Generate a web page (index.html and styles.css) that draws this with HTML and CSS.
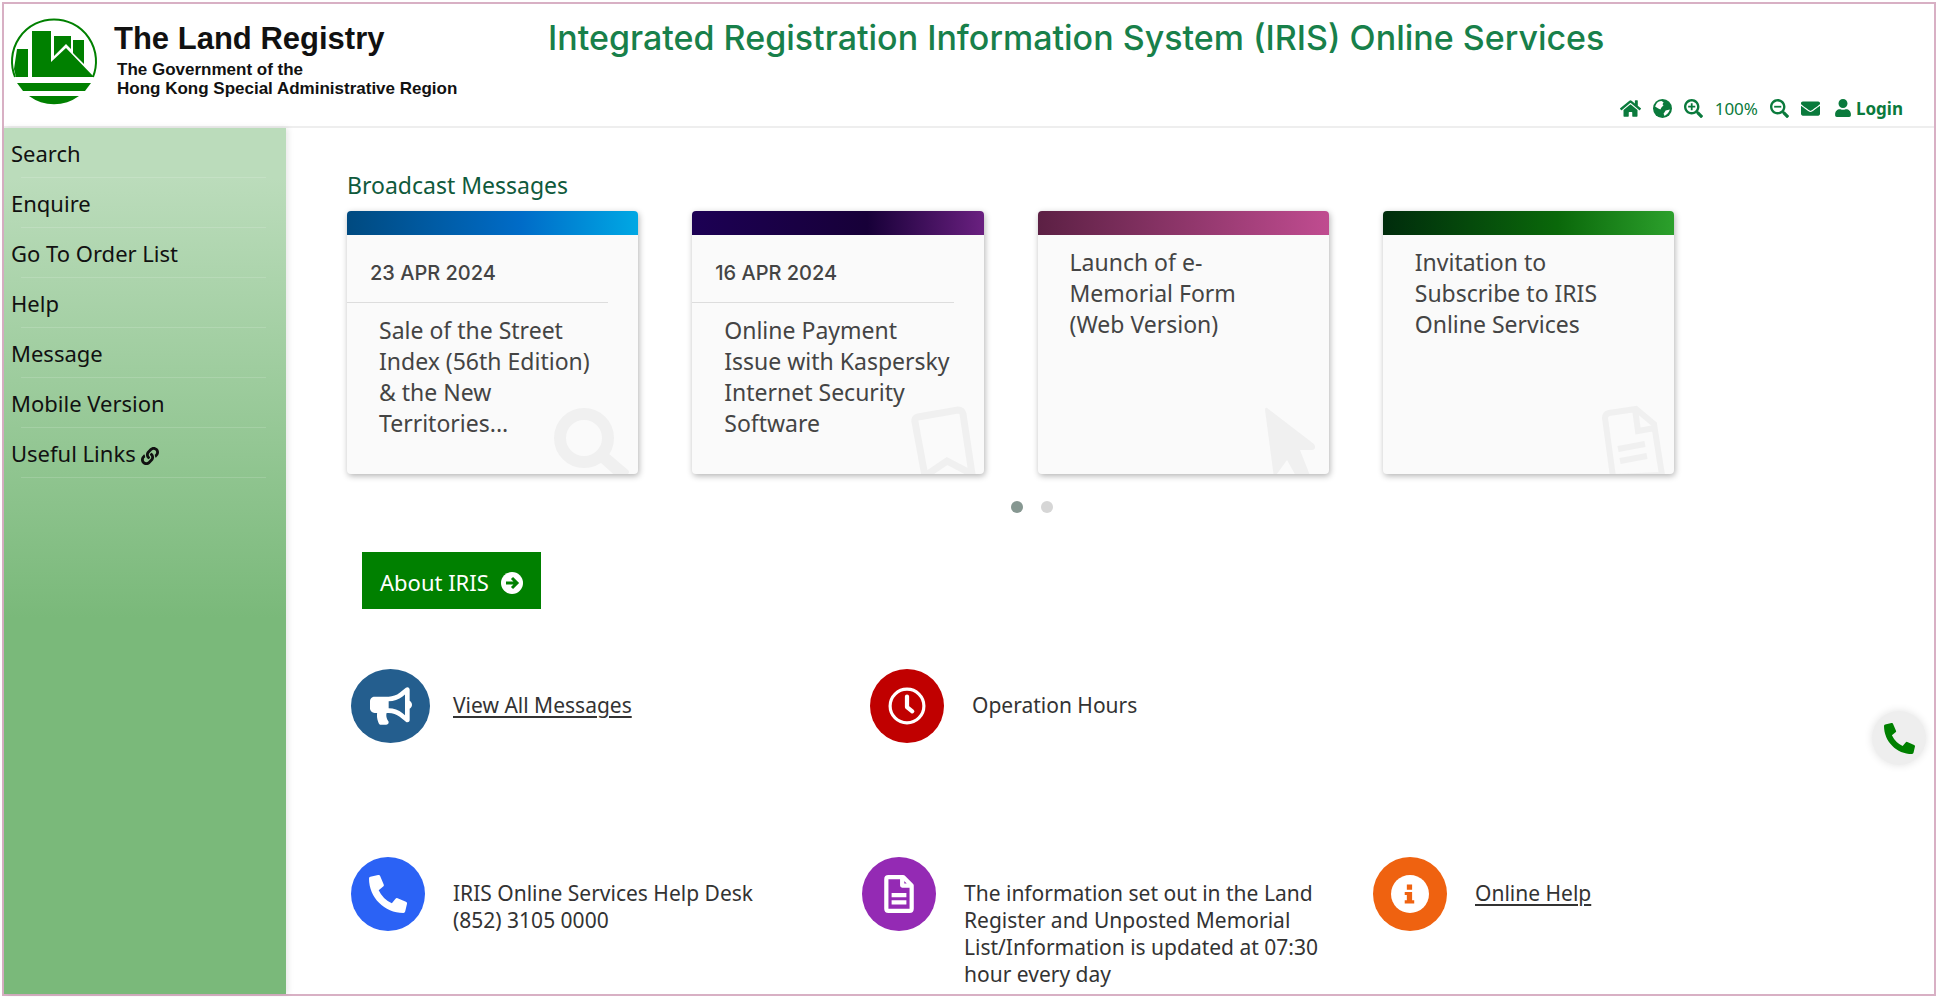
FILE: index.html
```html
<!DOCTYPE html>
<html lang="en">
<head>
  <meta charset="UTF-8">
  <meta name="viewport" content="width=device-width, initial-scale=1">
  <title>IRIS Online Services</title>
  <link rel="stylesheet" href="styles.css">
</head>
<body>
  <div class="page">
    <header class="header">
      <a href="#" class="brand">
        <svg class="brand-logo" viewBox="0 0 88 88" aria-hidden="true">
          <path d="M5 60 A42 42 0 1 1 83 60" fill="none" stroke="#008000" stroke-width="2"/>
          <path d="M7 32h11v28H6L4 52zM22 14h19v31l15-14 28 29H22zM44 19h17v13l-5-5-12 12zM63 23h11v24L63 36z"/>
          <path d="M7 66h74l-6 8H13zM19 79h50a42 42 0 0 1-50 0z"/>
        </svg>
        <span class="brand-text">
          <span class="brand-name">The Land Registry</span>
          <span class="brand-sub">The Government of the<br>Hong Kong Special Administrative Region</span>
        </span>
      </a>
      <h1 class="title">Integrated Registration Information System (IRIS) Online Services</h1>
      <div class="tools">
        <a href="#" aria-label="Home"><svg class="tool-icon wide" viewBox="0 0 576 512"><path d="M280.37 148.26L96 300.11V464a16 16 0 0 0 16 16l112.06-.29a16 16 0 0 0 15.92-16V368a16 16 0 0 1 16-16h64a16 16 0 0 1 16 16v95.64a16 16 0 0 0 16 16.05L464 480a16 16 0 0 0 16-16V300L295.67 148.26a12.19 12.19 0 0 0-15.3 0zM571.6 251.47L488 182.56V44.05a12 12 0 0 0-12-12h-56a12 12 0 0 0-12 12v72.61L318.47 43a48 48 0 0 0-61 0L4.34 251.47a12 12 0 0 0-1.6 16.9l25.5 31A12 12 0 0 0 45.15 301l235.22-193.74a12.19 12.19 0 0 1 15.3 0L530.9 301a12 12 0 0 0 16.9-1.6l25.5-31a12 12 0 0 0-1.7-16.93z"/></svg></a>
        <a href="#" aria-label="Language"><svg class="tool-icon" viewBox="0 0 18 18"><circle cx="9" cy="9" r="9"/><path fill="#fff" d="M3 5C4 3 6 2 8 2l2 1-1 2 1 1-2 2-1 2-2-1-3-2zM12 11l4-1c-1 3-3 5-5 6l-1-2z"/></svg></a>
        <button class="tool-button" aria-label="Zoom in"><svg class="tool-icon" viewBox="0 0 512 512"><path d="M505 442.7L405.3 343c-4.5-4.5-10.6-7-17-7H372c27.6-35.3 44-79.7 44-128C416 93.1 322.9 0 208 0S0 93.1 0 208s93.1 208 208 208c48.3 0 92.7-16.4 128-44v16.3c0 6.4 2.5 12.5 7 17l99.7 99.7c9.4 9.4 24.6 9.4 33.9 0l28.3-28.3c9.4-9.4 9.4-24.6.1-34zM208 352c-79.5 0-144-64.4-144-144 0-79.5 64.4-144 144-144 79.5 0 144 64.4 144 144 0 79.5-64.4 144-144 144z"/><path d="M184 112h48v72h72v48h-72v72h-48v-72h-72v-48h72z"/></svg></button>
        <span class="zoom-level">100%</span>
        <button class="tool-button" aria-label="Zoom out"><svg class="tool-icon" viewBox="0 0 512 512"><path d="M505 442.7L405.3 343c-4.5-4.5-10.6-7-17-7H372c27.6-35.3 44-79.7 44-128C416 93.1 322.9 0 208 0S0 93.1 0 208s93.1 208 208 208c48.3 0 92.7-16.4 128-44v16.3c0 6.4 2.5 12.5 7 17l99.7 99.7c9.4 9.4 24.6 9.4 33.9 0l28.3-28.3c9.4-9.4 9.4-24.6.1-34zM208 352c-79.5 0-144-64.4-144-144 0-79.5 64.4-144 144-144 79.5 0 144 64.4 144 144 0 79.5-64.4 144-144 144z"/><path d="M112 184h192v48H112z"/></svg></button>
        <a href="#" aria-label="Contact us"><svg class="tool-icon" viewBox="0 0 512 512"><path d="M502.3 190.8c3.9-3.1 9.7-.2 9.7 4.7V400c0 26.5-21.5 48-48 48H48c-26.5 0-48-21.5-48-48V195.6c0-5 5.7-7.8 9.7-4.7 22.4 17.4 52.1 39.5 154.1 113.6 21.1 15.4 56.7 47.8 92.2 47.6 35.7.3 72-32.8 92.3-47.6 102-74.1 131.6-96.3 154-113.7zM256 320c23.2.4 56.6-29.2 73.4-41.4 132.7-96.3 142.8-104.7 173.4-128.7 5.8-4.5 9.2-11.5 9.2-18.9v-19c0-26.5-21.5-48-48-48H48c-26.5 0-48 21.5-48 48v19c0 7.4 3.4 14.3 9.2 18.9 30.6 23.9 40.7 32.4 173.4 128.7 16.8 12.2 50.2 41.8 73.4 41.4z"/></svg></a>
        <a href="#" class="login"><svg class="user-icon" viewBox="0 0 448 512" aria-hidden="true"><path d="M224 256c70.7 0 128-57.3 128-128S294.7 0 224 0 96 57.3 96 128s57.3 128 128 128zm89.6 32h-16.7c-22.2 10.2-46.9 16-72.9 16s-50.6-5.8-72.9-16h-16.7C60.2 288 0 348.2 0 422.4V464c0 26.5 21.5 48 48 48h352c26.5 0 48-21.5 48-48v-41.6c0-74.2-60.2-134.4-134.4-134.4z"/></svg>Login</a>
      </div>
    </header>

    <div class="layout">
      <nav class="sidebar">
        <ul class="menu">
          <li><a href="#">Search</a></li>
          <li><a href="#">Enquire</a></li>
          <li><a href="#">Go To Order List</a></li>
          <li><a href="#">Help</a></li>
          <li><a href="#">Message</a></li>
          <li><a href="#">Mobile Version</a></li>
          <li><a href="#">Useful Links <svg class="link-icon" viewBox="0 0 512 512" aria-hidden="true"><path d="M326.612 185.391c59.747 59.809 58.927 155.698.36 214.59-.11.12-.24.25-.36.37l-67.2 67.2c-59.27 59.27-155.699 59.262-214.96 0-59.27-59.26-59.27-155.7 0-214.96l37.106-37.106c9.84-9.84 26.786-3.3 27.294 10.606.648 17.722 3.826 35.527 9.69 52.721 1.986 5.822.567 12.262-3.783 16.612l-13.087 13.087c-28.026 28.026-28.905 73.66-1.155 101.96 28.024 28.579 74.086 28.749 102.325.51l67.2-67.19c28.191-28.191 28.073-73.757 0-101.83-3.701-3.694-7.429-6.564-10.341-8.569a16.037 16.037 0 0 1-6.947-12.606c-.396-10.567 3.348-21.456 11.698-29.806l21.054-21.055c5.521-5.521 14.182-6.199 20.584-1.731a152.482 152.482 0 0 1 20.522 17.197zM467.547 44.449c-59.261-59.262-155.69-59.27-214.96 0l-67.2 67.2c-.12.12-.25.25-.36.37-58.566 58.892-59.387 154.781.36 214.59a152.454 152.454 0 0 0 20.521 17.196c6.402 4.468 15.064 3.789 20.584-1.731l21.054-21.055c8.35-8.35 12.094-19.239 11.698-29.806a16.037 16.037 0 0 0-6.947-12.606c-2.912-2.005-6.64-4.875-10.341-8.569-28.073-28.073-28.191-73.639 0-101.83l67.2-67.19c28.239-28.239 74.3-28.069 102.325.51 27.75 28.3 26.872 73.934-1.155 101.96l-13.087 13.087c-4.35 4.35-5.769 10.79-3.783 16.612 5.864 17.194 9.042 34.999 9.69 52.721.509 13.906 17.454 20.446 27.294 10.606l37.106-37.106c59.271-59.259 59.271-155.699.001-214.959z"/></svg></a></li>
        </ul>
      </nav>

      <main class="main">
        <section class="broadcast">
          <h2>Broadcast Messages</h2>
          <div class="cards">
            <article class="card card-blue">
              <p class="card-date">23 APR 2024</p>
              <p class="card-text">Sale of the Street Index (56th Edition) &amp; the New Territories...</p>
              <svg class="card-icon" viewBox="0 0 80 70" aria-hidden="true"><circle cx="32" cy="34" r="24" fill="none" stroke="#f0f0f0" stroke-width="12"/><path d="M56 49l20 17q2 2 0 4l-7 7-21-19z"/></svg>
            </article>
            <article class="card card-purple">
              <p class="card-date">16 APR 2024</p>
              <p class="card-text">Online Payment Issue with Kaspersky Internet Security Software</p>
              <svg class="card-icon" viewBox="-3 0 80 70" aria-hidden="true"><path d="M24 72L14 18q-1-4 3-5l40-7q4 0 5 4l9 60-25-13z" fill="none" stroke="#f0f0f0" stroke-width="7"/></svg>
            </article>
            <article class="card card-pink">
              <p class="card-text">Launch of e-Memorial Form (Web Version)</p>
              <svg class="card-icon" viewBox="-5 -2 80 70" aria-hidden="true"><path d="M19 2q-2-1-2 2l9 68 13-18 10 18h14L52 44l12 0q5-1 2-6z"/></svg>
            </article>
            <article class="card card-green">
              <p class="card-text">Invitation to Subscribe to IRIS Online Services</p>
              <svg class="card-icon" viewBox="-5 -2 80 70" aria-hidden="true"><g fill="none" stroke="#f0f0f0" stroke-width="6"><path d="M20 71L12 12q0-4 4-5l27-4 18 15 8 51zM42 3l3 22 17-3M25 43l27-5M27 55l27-5"/></g></svg>
            </article>
          </div>
          <div class="dots">
            <button class="dot active" aria-label="Slide 1"></button>
            <button class="dot" aria-label="Slide 2"></button>
          </div>
        </section>

        <a href="#" class="about">About IRIS
          <svg class="about-icon" viewBox="0 0 22 22" aria-hidden="true"><circle cx="11" cy="11" r="11" fill="#fff"/><path d="M5 11h11M11 6l5 5-5 5" fill="none" stroke="#008000" stroke-width="3"/></svg>
        </a>

        <div class="info-row info-top">
          <div class="info">
            <span class="info-icon navy"><svg viewBox="0 0 576 512" aria-hidden="true"><path d="M576 240c0-23.63-12.95-44.04-32-55.12V32.01C544 23.26 537.02 0 512 0c-7.12 0-14.19 2.38-19.98 7.02l-85.03 68.03C364.28 109.19 310.66 128 256 128H64c-35.35 0-64 28.65-64 64v96c0 35.35 28.65 64 64 64h33.7c-1.39 10.48-2.18 21.14-2.18 32 0 39.77 9.26 77.35 25.56 110.94 5.19 10.69 16.52 17.06 28.4 17.06h74.28c26.05 0 41.69-29.84 25.9-50.56-16.4-21.52-26.15-48.36-26.15-77.44 0-11.11 1.62-21.79 4.41-32H256c54.66 0 108.28 18.81 150.98 52.95l85.03 68.03a32.023 32.023 0 0 0 19.98 7.02c24.92 0 32-22.78 32-32V295.13C563.05 284.04 576 263.63 576 240zm-96 141.42l-33.05-26.44C392.95 311.78 325.12 288 256 288v-96c69.12 0 136.95-23.78 190.95-66.98L480 98.58v282.84z"/></svg></span>
            <a href="#">View All Messages</a>
          </div>
          <div class="info">
            <span class="info-icon red"><svg viewBox="0 0 36 36" aria-hidden="true"><g fill="none" stroke="#fff"><circle cx="18" cy="18" r="16" stroke-width="3"/><path d="M18 9v10l5 4" stroke-width="4" stroke-linecap="round" stroke-linejoin="round"/></g></svg></span>
            <p>Operation Hours</p>
          </div>
        </div>

        <div class="info-row">
          <div class="info">
            <span class="info-icon blue"><svg viewBox="0 0 512 512" aria-hidden="true"><path d="M497.39 361.8l-112-48a24 24 0 0 0-28 6.9l-49.6 60.6A370.66 370.66 0 0 1 130.6 204.11l60.6-49.6a23.94 23.94 0 0 0 6.9-28l-48-112A24.16 24.16 0 0 0 122.6.61l-104 24A24 24 0 0 0 0 48c0 256.5 207.9 464 464 464a24 24 0 0 0 23.4-18.6l24-104a24.29 24.29 0 0 0-14.01-27.6z"/></svg></span>
            <p>IRIS Online Services Help Desk<br>(852) 3105 0000</p>
          </div>
          <div class="info">
            <span class="info-icon violet"><svg viewBox="0 0 36 36" aria-hidden="true"><path d="M8 2h14l8 8v22q0 2-2 2H8q-2 0-2-2V4q0-2 2-2zM21 2v8h9M11 19h14M11 26h14" fill="none" stroke="#fff" stroke-width="4" stroke-linejoin="round"/></svg></span>
            <p>The information set out in the Land Register and Unposted Memorial List/Information is updated at 07:30 hour every day</p>
          </div>
          <div class="info">
            <span class="info-icon orange"><svg viewBox="0 0 36 36" aria-hidden="true"><circle cx="18" cy="18" r="18"/><path fill="#ef6210" d="M15 9h5v5h-5zM13 16h7v8h2v3h-9v-3h2v-5h-2z"/></svg></span>
            <a href="#">Online Help</a>
          </div>
        </div>
      </main>
    </div>

    <button class="call" aria-label="Call us"><svg viewBox="0 0 512 512"><path d="M497.39 361.8l-112-48a24 24 0 0 0-28 6.9l-49.6 60.6A370.66 370.66 0 0 1 130.6 204.11l60.6-49.6a23.94 23.94 0 0 0 6.9-28l-48-112A24.16 24.16 0 0 0 122.6.61l-104 24A24 24 0 0 0 0 48c0 256.5 207.9 464 464 464a24 24 0 0 0 23.4-18.6l24-104a24.29 24.29 0 0 0-14.01-27.6z"/></svg></button>
  </div>
</body>
</html>
```

FILE: styles.css
```css
* {
  box-sizing: border-box;
}
body {
  margin: 0;
  padding: 2px 2px 1px;
  font-family: "Noto Sans", sans-serif;
  font-size: 21px;
  line-height: 27px;
  color: #333;
  background: #fff;
}
h1, h2, p, ul {
  margin: 0;
  padding: 0;
  font-weight: 400;
}
svg {
  fill: currentColor;
}
button {
  border: 0;
  padding: 0;
  cursor: pointer;
}
.page {
  display: flex;
  flex-direction: column;
  min-height: calc(100vh - 3px);
  border: 2px solid #d8b0c4;
}

/* Header */
.header {
  display: grid;
  grid-template-columns: 544px 1fr;
  grid-template-rows: 88px 34px;
  border-bottom: 2px solid #eee;
}
.brand {
  display: flex;
  grid-row: span 2;
  gap: 16px;
  padding: 13px 0 0 6px;
  color: #111;
  font-family: "Liberation Sans", Arial, sans-serif;
  font-weight: 700;
  text-decoration: none;
}
.brand-logo {
  width: 88px;
  height: 88px;
  flex: none;
  color: #008000;
}
.brand-name {
  display: block;
  padding-top: 4px;
  font-size: 31px;
  line-height: 36px;
}
.brand-sub {
  display: block;
  padding: 3px 0 0 3px;
  font-size: 17px;
  line-height: 19px;
  white-space: nowrap;
}
.title {
  padding-top: 14px;
  font-family: Inter, sans-serif;
  font-size: 34px;
  font-weight: 500;
  line-height: 40px;
  color: #18804a;
}
.tools {
  display: flex;
  align-items: center;
  justify-content: flex-end;
  gap: 12px;
  grid-column: 2;
  padding: 0 31px 2px 0;
  font-size: 17px;
  color: #0a7a3c;
}
.tools a, .tool-button {
  display: flex;
  align-items: center;
  background: none;
  color: inherit;
  text-decoration: none;
}
.tool-icon {
  width: 19px;
  height: 19px;
}
.tool-icon.wide {
  width: 21px;
}
.tools .login {
  gap: 5px;
  margin-left: 3px;
  font-weight: 700;
}
.user-icon {
  width: 16px;
  height: 18px;
}

/* Sidebar */
.layout {
  display: flex;
  flex: 1;
}
.sidebar {
  width: 282px;
  flex: none;
  background: linear-gradient(#bbdcbb, #bbdcbb 50px, #7ab97a 490px);
  box-shadow: 2px 0 6px rgba(0,0,0,0.1);
}
.menu {
  list-style: none;
}
.menu a {
  display: block;
  padding: 12px 7px;
  font-size: 22px;
  line-height: 26px;
  color: #111;
  text-decoration: none;
}
.menu li::after {
  content: "";
  display: block;
  height: 1px;
  margin: -1px 20px 0 17px;
  background: rgba(255,255,255,0.15);
}
.link-icon {
  width: 18px;
  height: 18px;
  vertical-align: -3px;
}

/* Main area */
.main {
  flex: 1;
  min-width: 0;
  padding: 44px 50px 0 61px;
}
.broadcast {
  margin-right: 167px;
}
.broadcast h2 {
  margin-bottom: 12px;
  font-size: 23px;
  line-height: 27px;
  color: #0f5a3c;
}
.cards {
  display: grid;
  grid-template-columns: repeat(4, 1fr);
  gap: 54px;
  margin-right: 43px;
}
.card {
  position: relative;
  min-height: 263px;
  overflow: hidden;
  border-radius: 4px;
  background: #fafafa;
  box-shadow: 1px 2px 6px rgba(0,0,0,0.3);
}
.card::before {
  content: "";
  display: block;
  height: 24px;
}
.card-blue::before {
  background: linear-gradient(90deg, #004a80, #006cc8 60%, #00a8e4);
}
.card-purple::before {
  background: linear-gradient(90deg, #1c0054, #170038 60%, #6a2080);
}
.card-pink::before {
  background: linear-gradient(90deg, #5c2044, #c04c90);
}
.card-green::before {
  background: linear-gradient(90deg, #002c0c, #0a680a 60%, #2ca02c);
}
.card-date {
  margin-right: 30px;
  padding: 26px 0 17px 23px;
  border-bottom: 1px solid #ddd;
  font-family: Inter, sans-serif;
  font-size: 20px;
  font-weight: 500;
  line-height: 24px;
  color: #444;
}
.card-text {
  padding: 12px 32px 0;
  font-size: 23px;
  line-height: 31px;
  color: #444;
}
.card-icon {
  position: absolute;
  right: 4px;
  bottom: 0;
  width: 84px;
  height: 70px;
  color: #f0f0f0;
}
.dots {
  display: flex;
  justify-content: center;
  gap: 18px;
  margin-top: 27px;
}
.dot {
  width: 12px;
  height: 12px;
  border-radius: 50%;
  background: #d6d6d6;
}
.dot.active {
  background: #869791;
}
.about {
  display: inline-flex;
  align-items: center;
  gap: 12px;
  margin: 39px 0 0 15px;
  padding: 17px 18px 13px;
  font-size: 22px;
  background: #008000;
  color: #fff;
  text-decoration: none;
}
.about-icon {
  width: 22px;
  height: 22px;
}

/* Information links */
.info-row {
  display: grid;
  grid-template-columns: repeat(3, 1fr);
  margin: 114px 0 0 4px;
}
.info-top {
  margin: 60px -24px 0 4px;
}
.info {
  display: grid;
  grid-template-columns: 102px 1fr;
  padding-right: 50px;
}
.info p, .info a {
  padding-top: 23px;
  color: #333;
  text-underline-offset: 3px;
}
.info-icon {
  display: flex;
  align-items: center;
  justify-content: center;
  width: 74px;
  height: 74px;
  border-radius: 50%;
  color: #fff;
}
.info-icon svg {
  width: 38px;
  height: 38px;
}
.navy {
  width: 79px;
  background: #245e8e;
}
.navy svg {
  width: 42px;
}
.red {
  background: #c00000;
}
.blue {
  background: #2b62f5;
}
.violet {
  background: #942ab4;
}
.orange {
  background: #ef6210;
}

/* Floating call button */
.call {
  position: fixed;
  right: 12px;
  top: 711px;
  display: flex;
  align-items: center;
  justify-content: center;
  width: 54px;
  height: 54px;
  border-radius: 50%;
  background: #eee;
  color: #008000;
  box-shadow: 0 0 8px rgba(0,0,0,0.12);
}
.call svg {
  width: 31px;
  height: 31px;
}
```
